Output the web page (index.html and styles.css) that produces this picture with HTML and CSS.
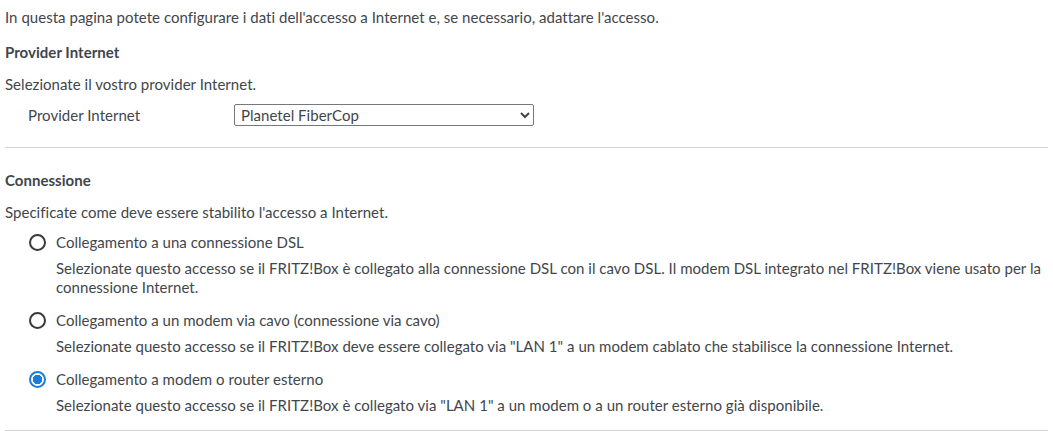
FILE: index.html
```
<!DOCTYPE html>
<html lang="it">
	<head>
		<meta charset="UTF-8" />
		<meta name="viewport" content="width=device-width, initial-scale=1.0" />
		<title>Accesso a Internet</title>
		<link rel="stylesheet" href="styles.css">
	</head>
	<body>
		<p class="intro">In questa pagina potete configurare i dati dell'accesso a Internet e, se necessario, adattare l'accesso.</p>

		<div class="section">
			<h4>Provider Internet</h4>
			<p class="hint">Selezionate il vostro provider Internet.</p>
			<div class="form-row">
				<label for="provider" class="row-label">Provider Internet</label>
				<select id="provider" class="provider-select">
					<option>Planetel FiberCop</option>
				</select>
			</div>
		</div>

		<div class="section">
			<h4>Connessione</h4>
			<p class="hint">Specificate come deve essere stabilito l'accesso a Internet.</p>

			<div class="option">
				<label class="option-label">
					<input type="radio" name="conn" />
					<span>Collegamento a una connessione DSL</span>
				</label>
				<p class="option-desc">Selezionate questo accesso se il FRITZ!Box è collegato alla connessione DSL con il cavo DSL. Il modem DSL integrato nel FRITZ!Box viene usato per la connessione Internet.</p>
			</div>

			<div class="option">
				<label class="option-label">
					<input type="radio" name="conn" />
					<span>Collegamento a un modem via cavo (connessione via cavo)</span>
				</label>
				<p class="option-desc">Selezionate questo accesso se il FRITZ!Box deve essere collegato via "LAN 1" a un modem cablato che stabilisce la connessione Internet.</p>
			</div>

			<div class="option">
				<label class="option-label">
					<input type="radio" name="conn" checked />
					<span>Collegamento a modem o router esterno</span>
				</label>
				<p class="option-desc">Selezionate questo accesso se il FRITZ!Box è collegato via "LAN 1" a un modem o a un router esterno già disponibile.</p>
			</div>
		</div>
	</body>
</html>
```
FILE: styles.css
```
body {
	font-family: "Source Sans Pro", Lato, "Liberation Sans", sans-serif;
	font-size: 15px;
	letter-spacing: 0.03px;
	line-height: 20px;
	color: #3f464c;
	background-color: #fff;
	margin: 0;
	padding: 7px 5px 0;
}

p {
	margin: 0;
}

h4 {
	margin: 0;
	font-size: 15px;
	font-weight: 700;
}

.intro {
	margin-bottom: 15px;
}

.hint {
	margin-top: 12px;
}

.section {
	padding-bottom: 15px;
	border-bottom: 1px solid #d4d4d4;
}

.section + .section {
	padding-top: 22px;
}

.form-row {
	display: flex;
	align-items: center;
	margin-top: 10px;
	margin-bottom: 6px;
}

.row-label {
	flex: 0 0 229px;
	padding-left: 23px;
	box-sizing: border-box;
}

.provider-select {
	width: 300px;
	height: 22px;
	font-family: inherit;
	font-size: 15px;
	letter-spacing: 0.03px;
	color: #3f464c;
	border: 1px solid #76797c;
	border-radius: 2px;
	background-color: #fff;
	padding: 0 2px;
}

.option {
	margin-top: 10px;
}

.option + .option {
	margin-top: 13px;
}

.option-label {
	display: flex;
	align-items: center;
	gap: 10px;
	padding-left: 24px;
}

.option-label input {
	appearance: none;
	-webkit-appearance: none;
	width: 17px;
	height: 17px;
	margin: 0;
	border: 2px solid #3a3a3a;
	border-radius: 50%;
	box-sizing: border-box;
	background-color: #fff;
}

.option-label input:checked {
	border-color: #1a7fdc;
	background: radial-gradient(circle, #1a7fdc 0 4.5px, #fff 5px);
}

.option-desc {
	margin: 7px 0 0 51px;
	line-height: 19px;
}
```
